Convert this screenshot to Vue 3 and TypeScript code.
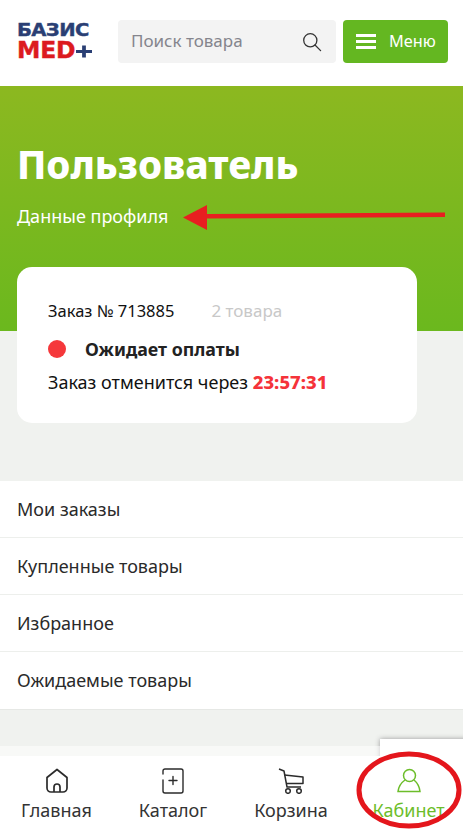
<script setup lang="ts">
const menu: string[] = ['Мои заказы', 'Купленные товары', 'Избранное', 'Ожидаемые товары']
</script>

<template>
  <div class="page">
    <header class="head">
      <div class="logo" aria-label="Базис Med+">
        <span class="logo-top">БАЗИС</span>
        <span class="logo-bottom">MED<svg class="logo-plus" width="16" height="13" viewBox="0 0 17 13"><path d="M0 5h6.500V0h4v5H17v3h-6.500v5h-4V8H0z" fill="#2a3f74"/></svg></span>
      </div>
      <div class="search">
        <span class="search-text">Поиск товара</span>
        <svg width="20" height="20" viewBox="0 0 20 20" fill="none" stroke="#333" stroke-width="1.3"><circle cx="8.300" cy="8.300" r="6.600"/><path d="M13 13l5.600 5.600" stroke-linecap="round"/></svg>
      </div>
      <div class="menu-btn">
        <span class="burger"><i></i><i></i><i></i></span>
        <span class="menu-label">Меню</span>
      </div>
    </header>

    <section class="hero">
      <h1>Пользователь</h1>
      <div class="profile">Данные профиля</div>
      <svg class="arrow" width="264" height="28" viewBox="0 0 264 28"><path d="M1 14.500L25 2v9l238-1.500v4.500L25 15.500V27z" fill="#e81f20"/></svg>
    </section>

    <main class="body">
      <div class="card">
        <div class="row-top"><span>Заказ № 713885</span><span class="count">2 товара</span></div>
        <div class="status"><i class="dot"></i><b>Ожидает оплаты</b></div>
        <div class="cancel">Заказ отменится через <b>23:57:31</b></div>
      </div>
      <ul class="list">
        <li v-for="m in menu" :key="m">{{ m }}</li>
      </ul>
    </main>

    <div class="badge"></div>
    <nav class="nav">
      <div class="tab">
        <svg width="24" height="26" viewBox="0 0 24 26" fill="none" stroke="#2b2b2b" stroke-width="1.700" stroke-linejoin="round"><path d="M12 1.500L2 9.500V20a4 4 0 0 0 4 4h12a4 4 0 0 0 4-4V9.500z"/><path d="M9 24v-5a3 3 0 0 1 6 0v5"/></svg>
        <span>Главная</span>
      </div>
      <div class="tab">
        <svg width="24" height="26" viewBox="0 0 24 26" fill="none" stroke="#2b2b2b" stroke-width="1.400" stroke-linecap="round"><path d="M2 6V3a2 2 0 0 1 2-2h16a2 2 0 0 1 2 2v20a2 2 0 0 1-2 2H4a2 2 0 0 1-2-2V12"/><path d="M12 8.500v8M8 12.500h8"/></svg>
        <span>Каталог</span>
      </div>
      <div class="tab">
        <svg width="26" height="26" viewBox="0 0 26 26" fill="none" stroke="#2b2b2b" stroke-width="1.500" stroke-linejoin="round"><path d="M1 1l5 2 3 16h14"/><path d="M6.500 7L25 9v6.500H8.500"/><circle cx="10" cy="23" r="2.300"/><circle cx="21" cy="23" r="2.300"/></svg>
        <span>Корзина</span>
      </div>
      <div class="tab active">
        <svg width="24" height="26" viewBox="0 0 24 26" fill="none" stroke="#6cbd2a" stroke-width="1.500"><circle cx="12.500" cy="7.500" r="6"/><path d="M8 12C4.500 14.500 1.500 19 1 23.500h22C22.500 19 20 14.500 17 12"/></svg>
        <span>Кабинет</span>
      </div>
    </nav>
    <svg class="ring" width="110" height="80" viewBox="0 0 110 80" fill="none"><ellipse cx="55" cy="40" rx="50" ry="36" stroke="#e4161c" stroke-width="5"/></svg>
  </div>
</template>

<style>
html, body { margin: 0; background: #f0f2ef; }
</style>

<style scoped>
.page {
  position: relative;
  width: 463px;
  height: 830px;
  overflow: hidden;
  background: #f0f2ef;
  font-family: "Noto Sans", "Open Sans", sans-serif;
  color: #222;
}
.head {
  height: 86px;
  box-sizing: border-box;
  padding: 20px 15px 0 17px;
  background: #fff;
  display: flex;
  align-items: flex-start;
}
.logo {
  width: 75px;
  margin-right: 26px;
  display: flex;
  flex-direction: column;
  gap: 2px;
  font-family: "DejaVu Sans", sans-serif;
  font-weight: 700;
  -webkit-text-stroke: 0.4px currentColor;
}
.logo-top { font-size: 18.500px; line-height: 19px; color: #2a3f74; letter-spacing: -0.600px; transform-origin: left; transform: scaleX(1.060); white-space: nowrap; }
.logo-bottom { font-size: 23.500px; line-height: 19px; color: #dc1a1f; letter-spacing: -0.200px; display: flex; align-items: center; white-space: nowrap; }
.logo-plus { margin-left: 1px; margin-top: 2px; flex: none; }
.search {
  width: 218px;
  height: 43px;
  box-sizing: border-box;
  padding: 0 14px 0 13px;
  background: #f3f3f3;
  border-radius: 4px;
  display: flex;
  align-items: center;
  justify-content: space-between;
  font-size: 17px;
  color: #85858d;
}
.search-text { margin-bottom: 2px; }
.menu-btn {
  width: 105px;
  height: 43px;
  margin-left: 7px;
  box-sizing: border-box;
  padding-left: 13px;
  background: #64b721;
  border-radius: 4px;
  display: flex;
  align-items: center;
  gap: 13px;
  color: #fff;
  font-size: 16.300px;
}
.menu-label { margin-bottom: 2px; }
.burger { width: 20px; display: flex; flex-direction: column; gap: 3px; }
.burger i { display: block; height: 3px; background: #fff; }
.hero {
  position: relative;
  height: 245px;
  box-sizing: border-box;
  padding: 50px 17px 0;
  background: linear-gradient(180deg, #8cb820 0%, #6bb81e 100%);
  color: #fff;
}
.hero h1 {
  margin: 0;
  font-size: 38.500px;
  line-height: 56px;
  font-weight: 800;
}
.profile { margin-top: 12px; font-size: 18px; line-height: 24px; }
.arrow { position: absolute; left: 182px; top: 117px; }
.body { margin-top: -64px; position: relative; }
.card {
  width: 400px;
  height: 156px;
  margin-left: 17px;
  box-sizing: border-box;
  padding: 32px 31px 0;
  background: #fff;
  border-radius: 15px;
  font-size: 16.500px;
  color: #111;
}
.row-top { display: flex; gap: 37px; line-height: 24px; height: 24px; }
.count { color: #c8c8c8; font-size: 17px; }
.status { margin-top: 14px; display: flex; align-items: center; gap: 19px; height: 24px; font-size: 17.800px; color: #222; }
.dot { width: 18px; height: 18px; border-radius: 50%; background: #f5383b; }
.cancel { margin-top: 9px; font-size: 18px; line-height: 24px; }
.cancel b { color: #f5333a; font-size: 18.500px; font-weight: 800; }
.list {
  margin: 58px 0 0;
  padding: 0;
  list-style: none;
  background: #fff;
  border-bottom: 1px solid #e6e8e5;
}
.list li {
  height: 57px;
  box-sizing: border-box;
  padding-left: 17px;
  padding-bottom: 1px;
  display: flex;
  align-items: center;
  font-size: 18px;
  color: #2a2a2a;
  border-bottom: 1px solid #edefec;
}
.list li:last-child { border-bottom: none; }
.badge {
  position: absolute;
  left: 380px;
  top: 739px;
  width: 100px;
  height: 60px;
  background: #fff;
  box-shadow: 0 0 5px #999;
}
.nav {
  position: absolute;
  left: 0;
  right: 0;
  top: 746px;
  height: 84px;
  box-sizing: border-box;
  border-top: 10px solid rgba(255, 255, 255, 0.5);
  background: #fff;
  background-clip: padding-box;
  display: grid;
  grid-template-columns: 113px 120px 116px 114px;
  padding-top: 12px;
}
.tab {
  display: flex;
  flex-direction: column;
  align-items: center;
  font-size: 18px;
  line-height: 24px;
  color: #333;
}
.tab svg { flex: none; }
.tab span { margin-top: 4px; }
.active { color: #6cbd2a; padding-left: 5px; }
.ring { position: absolute; left: 354px; top: 750px; }
</style>
